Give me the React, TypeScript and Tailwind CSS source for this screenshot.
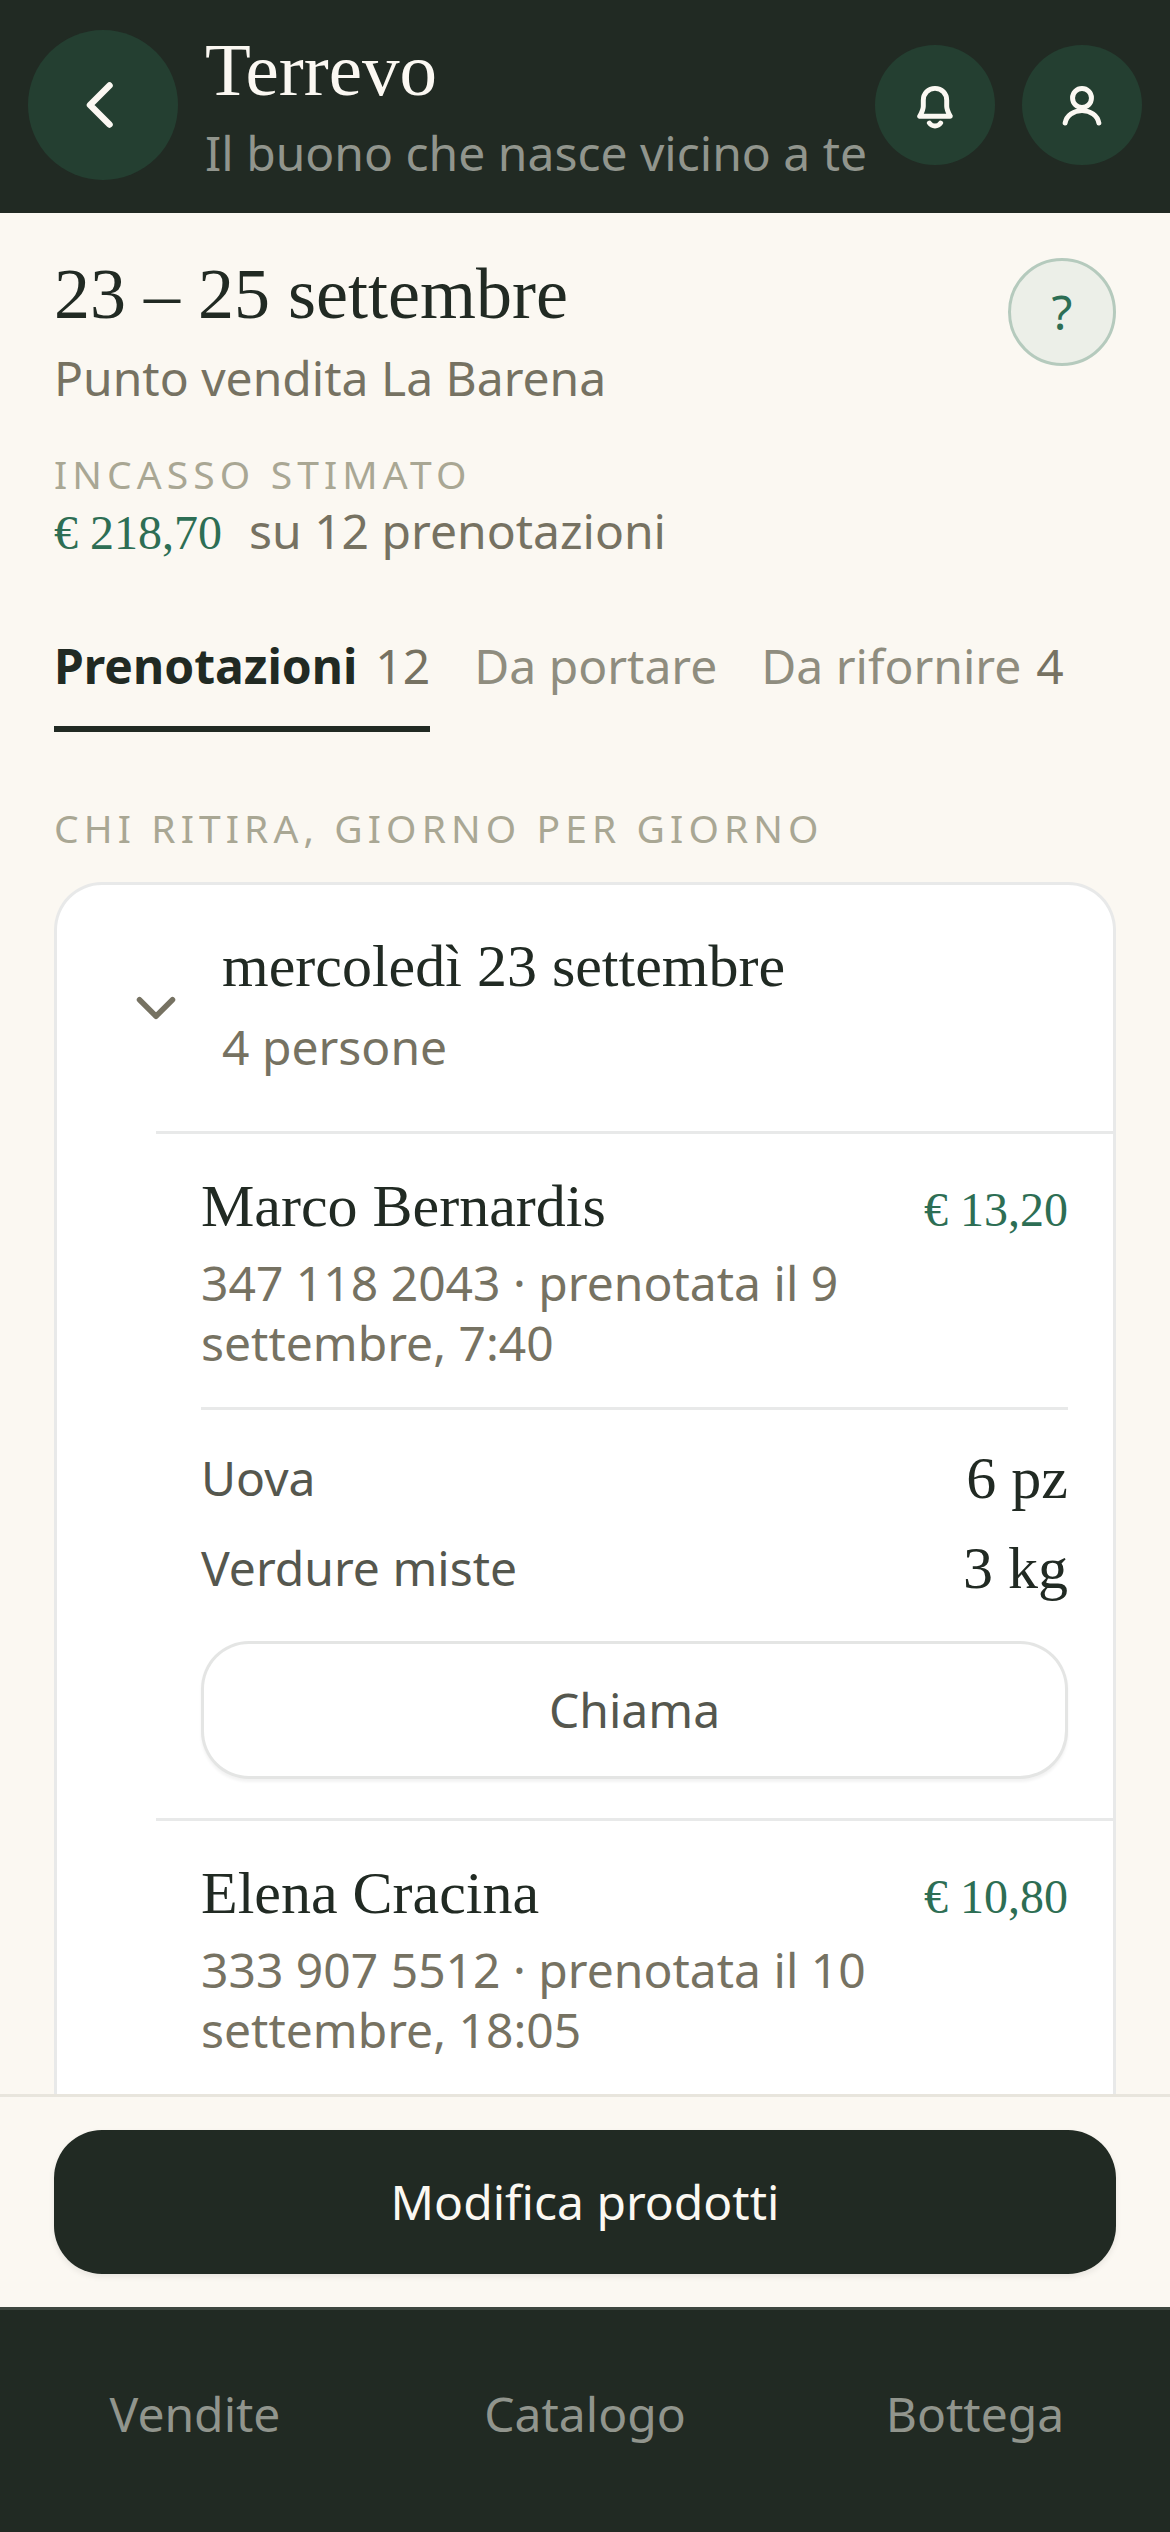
const serif = "font-['Liberation_Serif',serif]";

function Person({ name, price, l1, l2, children }: { name: string; price: string; l1: string; l2: string; children?: React.ReactNode }) {
  return (
    <div className="ml-[99px] border-t-[3px] border-[#212a23]/10 pl-[45px] pr-[45px] pt-[36px]">
      <div className="flex items-baseline justify-between">
        <div className={`${serif} text-[60px] leading-[72px] text-[#212a23]`}>{name}</div>
        <div className={`${serif} text-[48px] leading-[60px] text-[#2d6e54]`}>{price}</div>
      </div>
      <div className="mt-[11px] text-[48px] leading-[60px] text-[#767262]">{l1}<br />{l2}</div>
      {children}
    </div>
  );
}

function Row({ a, b }: { a: string; b: string }) {
  return (
    <div className="flex h-[90px] items-center justify-between">
      <span className="text-[48px] text-[#55574e]">{a}</span>
      <span className={`${serif} text-[60px] text-[#212a23]`}>{b}</span>
    </div>
  );
}

export default function App() {
  return (
    <div className="flex h-[2532px] w-[1170px] flex-col overflow-hidden bg-[#fbf8f2] font-['Noto_Sans',sans-serif]">
      <header className="flex h-[213px] shrink-0 items-start gap-[27px] bg-[#212a23] pl-[28px] pr-[28px] pt-[30px]">
        <button className="flex h-[150px] w-[150px] shrink-0 items-center justify-center rounded-full bg-[#243f31]">
          <svg width="78" height="78" viewBox="0 0 24 24" fill="none" stroke="#fbf8f2" strokeWidth="2" strokeLinecap="round" strokeLinejoin="round"><path d="M14 18l-6-6 6-6" /></svg>
        </button>
        <div className="min-w-0 flex-1">
          <div className={`${serif} mt-[-2px] text-[75px] leading-[84px] text-[#fbf8f2]`}>Terrevo</div>
          <div className="mt-[8px] whitespace-nowrap text-[48px] leading-[66px] text-[#91958d]">Il buono che nasce vicino a te</div>
        </div>
        <div className="mt-[15px] flex gap-[27px]">
          <button className="flex h-[120px] w-[120px] items-center justify-center rounded-full bg-[#243f31]">
            <svg width="54" height="54" viewBox="0 0 24 24" fill="none" stroke="#fbf8f2" strokeWidth="2.200" strokeLinecap="round" strokeLinejoin="round"><path d="M12 4.600c-3 0-5.200 2.300-5.200 5.300v2.600c0 1.600-.6 2.600-1.600 4.500h13.600c-1-1.900-1.600-2.900-1.600-4.500V9.900c0-3-2.200-5.300-5.200-5.300z" /><path d="M9.500 20a3 3 0 0 0 5 0" /></svg>
          </button>
          <button className="flex h-[120px] w-[120px] items-center justify-center rounded-full bg-[#243f31]">
            <svg width="54" height="54" viewBox="0 0 24 24" fill="none" stroke="#fbf8f2" strokeWidth="2.200" strokeLinecap="round" strokeLinejoin="round"><circle cx="12" cy="8.900" r="4.200" /><path d="M4.500 20c.6-3.400 3.700-5.500 7.500-5.500s6.900 2.100 7.500 5.500" /></svg>
          </button>
        </div>
      </header>

      <main className="min-h-0 flex-1 overflow-hidden px-[54px]">
        <div className="flex items-start justify-between pt-[39px]">
          <div>
            <h1 className={`${serif} text-[72px] leading-[84px] text-[#212a23]`}>23 – 25 settembre</h1>
            <p className="mt-[9px] text-[48px] leading-[66px] text-[#767262]">Punto vendita La Barena</p>
          </div>
          <div className="mt-[6px] flex h-[108px] w-[108px] items-center justify-center rounded-full border-[3px] border-[#b5cabd] bg-[#ecefe8] text-[48px] text-[#2d6e54]">?</div>
        </div>
        <div className="mt-[36px] text-[39px] leading-[54px] tracking-[5.1px] text-[#a9a794]">INCASSO STIMATO</div>
        <div className="flex items-baseline gap-[27px] leading-[60px]">
          <span className={`${serif} text-[48px] text-[#2d6e54]`}>€ 218,70</span>
          <span className="text-[48px] text-[#767262]">su 12 prenotazioni</span>
        </div>
        <div className="mt-[42px] flex gap-[44px] whitespace-nowrap">
          <div className="flex h-[127px] items-center gap-[18px] border-b-[6px] border-[#212a23]">
            <span className="text-[48px] font-bold text-[#212a23]">Prenotazioni</span>
            <span className="text-[48px] text-[#767262]">12</span>
          </div>
          <div className="flex h-[127px] items-center pb-[6px] text-[48px] text-[#8f8d7f]">Da portare</div>
          <div className="flex h-[127px] items-center gap-[15px] pb-[6px] text-[48px] text-[#8f8d7f]"><span>Da rifornire</span><span className="text-[#767262]">4</span></div>
        </div>
        <div className="mt-[69px] text-[39px] leading-[54px] tracking-[5.100px] text-[#a9a794]">CHI RITIRA, GIORNO PER GIORNO</div>
        <section className="mt-[27px] rounded-[48px] border-[3px] border-[#212a23]/10 bg-white pb-[300px]">
          <div className="flex items-center gap-[33px] pl-[66px] pt-[45px] pb-[51px]">
            <svg className="mt-[6px]" width="66" height="66" viewBox="0 0 24 24" fill="none" stroke="#767262" strokeWidth="2" strokeLinecap="round" strokeLinejoin="round"><path d="M6 9l6 6 6-6" /></svg>
            <div>
              <div className={`${serif} text-[60px] leading-[72px] text-[#212a23]`}>mercoledì 23 settembre</div>
              <div className="mt-[12px] text-[48px] leading-[66px] text-[#767262]">4 persone</div>
            </div>
          </div>
          <Person name="Marco Bernardis" price="€ 13,20" l1="347 118 2043 · prenotata il 9" l2="settembre, 7:40">
            <div className="mt-[34px] border-t-[3px] border-[#212a23]/10 pt-[23px]">
              <Row a="Uova" b="6 pz" />
              <Row a="Verdure miste" b="3 kg" />
              <button className="mt-[28px] mb-[39px] flex h-[138px] w-full items-center justify-center rounded-[48px] border-[3px] border-[#212a23]/12 bg-white text-[48px] text-[#55574e] shadow-[0_3px_3px_rgba(0,0,0,0.05)]">Chiama</button>
            </div>
          </Person>
          <Person name="Elena Cracina" price="€ 10,80" l1="333 907 5512 · prenotata il 10" l2="settembre, 18:05" />
        </section>
      </main>

      <div className="relative shrink-0 border-t-[3px] border-[#e8e5dd] bg-[#fbf8f2] px-[54px] pt-[33px] pb-[33px]">
        <button className="flex h-[144px] w-full items-center justify-center rounded-[48px] bg-[#212a23] text-[48px] text-[#fbf8f2] shadow-[0_3px_6px_rgba(0,0,0,0.08)]">Modifica prodotti</button>
      </div>
      <nav className="grid h-[225px] shrink-0 grid-cols-3 items-center border-t-[3px] border-[#3d463f] bg-[#212a23] pb-[15px] text-center text-[48px] text-[#91958d]">
        <span>Vendite</span><span>Catalogo</span><span>Bottega</span>
      </nav>
    </div>
  );
}
